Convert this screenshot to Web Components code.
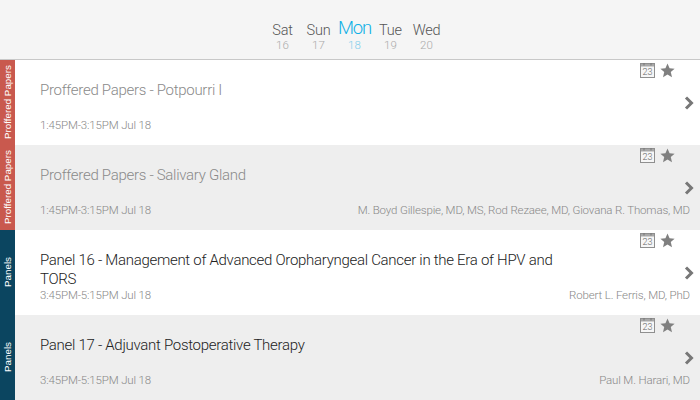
<!DOCTYPE html>
<html>
<head>
<meta charset="utf-8">
<style>
  html, body { margin: 0; padding: 0; height: 400px; overflow: hidden; background: #fff; }
  body { font-family: Roboto, "Liberation Sans", sans-serif; font-weight: 300; }
</style>
</head>
<body>
<day-bar>
  <day-tab name="Sat" num="16"></day-tab>
  <day-tab name="Sun" num="17"></day-tab>
  <day-tab name="Mon" num="18" active></day-tab>
  <day-tab name="Tue" num="19"></day-tab>
  <day-tab name="Wed" num="20"></day-tab>
</day-bar>
<session-row track="Proffered Papers" color="#c9594e" time="1:45PM-3:15PM Jul 18" muted>Proffered Papers - Potpourri I</session-row>
<session-row track="Proffered Papers" color="#c9594e" time="1:45PM-3:15PM Jul 18" speakers="M. Boyd Gillespie, MD, MS, Rod Rezaee, MD, Giovana R. Thomas, MD" muted alt>Proffered Papers - Salivary Gland</session-row>
<session-row track="Panels" color="#0b4560" time="3:45PM-5:15PM Jul 18" speakers="Robert L. Ferris, MD, PhD">Panel 16 - Management of Advanced Oropharyngeal Cancer in the Era of HPV and TORS</session-row>
<session-row track="Panels" color="#0b4560" time="3:45PM-5:15PM Jul 18" speakers="Paul M. Harari, MD" alt>Panel 17 - Adjuvant Postoperative Therapy</session-row>

<script>
class DayBar extends HTMLElement {
  constructor() {
    super();
    this.attachShadow({ mode: 'open' });
    this.shadowRoot.innerHTML = `
      <style>
        :host {
          display: flex;
          justify-content: center;
          align-items: flex-end;
          height: 60px;
          box-sizing: border-box;
          padding-bottom: 7px;
          padding-left: 9px;
          background: #f5f5f5;
          border-bottom: 1px solid #c8c8c8;
        }
      </style>
      <slot></slot>
    `;
  }
}

class DayTab extends HTMLElement {
  constructor() {
    super();
    this.attachShadow({ mode: 'open' });
    this.shadowRoot.innerHTML = `
      <style>
        :host {
          display: flex;
          flex-direction: column;
          align-items: center;
          width: 36px;
        }
        #name { font-size: 14.5px; line-height: 16px; letter-spacing: -0.2px; color: #555; }
        #num { font-size: 11.5px; line-height: 13px; color: #aaa; }
        :host([active]) #name { font-size: 18.5px; line-height: 20px; letter-spacing: -1.2px; color: #0fb0e6; margin-bottom: 1px; }
        :host([active]) #num { color: #7fcdec; }
      </style>
      <span id="name"></span>
      <span id="num"></span>
    `;
    this.shadowRoot.querySelector('#name').textContent = this.getAttribute('name');
    this.shadowRoot.querySelector('#num').textContent = this.getAttribute('num');
  }
}

class SessionRow extends HTMLElement {
  constructor() {
    super();
    this.attachShadow({ mode: 'open' });
    this.shadowRoot.innerHTML = `
      <style>
        :host {
          display: grid;
          grid-template-columns: 15px 1fr;
          height: 85px;
          background: #fff;
        }
        :host([alt]) { background: #eee; }
        #track {
          display: flex;
          align-items: center;
          justify-content: center;
          box-sizing: border-box;
          padding-left: 1px;
          writing-mode: vertical-rl;
          transform: rotate(180deg);
          color: #fff;
          font-family: "Liberation Sans", sans-serif;
          font-size: 9.8px;
          font-weight: 400;
        }
        #body {
          position: relative;
          display: grid;
          grid-template-columns: 1fr auto;
          grid-template-rows: 1fr auto;
          min-width: 0;
          padding: 0 10px 13px 25px;
          color: #222;
        }
        :host([muted]) #body { color: #8a8a8a; }
        #title {
          grid-column: 1;
          grid-row: 1;
          font-size: 15px;
          line-height: 19px;
          letter-spacing: -0.29px;
          padding-top: 21px;
          max-width: 530px;
        }
        #time, #speakers { font-size: 11.5px; line-height: 13px; letter-spacing: -0.15px; color: #888; }
        #time { grid-column: 1; grid-row: 2; }
        #speakers { grid-column: 2; grid-row: 2; text-align: right; white-space: nowrap; }
        #tools {
          position: absolute;
          top: 3px;
          right: 25px;
          display: flex;
          align-items: center;
          gap: 5px;
        }
        #chevron { position: absolute; top: 36px; right: 6px; }
        svg { display: block; }
      </style>
      <div id="track"></div>
      <div id="body">
        <div id="title"><slot></slot></div>
        <div id="time"></div>
        <div id="speakers"></div>
        <div id="tools">
          <svg width="15" height="15" viewBox="0 0 15 15">
            <rect x="0.5" y="0.5" width="14" height="14" fill="#f6f6f6" stroke="#8f8f8f"/>
            <rect x="1" y="1" width="13" height="2.5" fill="#a8a8a8"/>
            <path d="M4 0v2.5M11 0v2.5" stroke="#777" stroke-width="1"/>
            <text x="7.5" y="12.4" font-size="9" font-weight="300" text-anchor="middle" fill="#666" font-family="Roboto">23</text>
          </svg>
          <svg width="15" height="15" viewBox="0 0 16 16">
            <path d="M8 .6l2.2 5 5.4.5-4.1 3.6 1.3 5.4L8 12.3l-4.8 2.8 1.3-5.4L.4 6.1l5.4-.5z" fill="#808080"/>
          </svg>
        </div>
        <svg id="chevron" width="10" height="14" viewBox="0 0 10 14">
          <path d="M2 1.5L7.5 7 2 12.5" fill="none" stroke="#777" stroke-width="3"/>
        </svg>
      </div>
    `;
    const track = this.shadowRoot.querySelector('#track');
    track.textContent = this.getAttribute('track');
    track.style.background = this.getAttribute('color');
    this.shadowRoot.querySelector('#time').textContent = this.getAttribute('time');
    this.shadowRoot.querySelector('#speakers').textContent = this.getAttribute('speakers') || '';
  }
}

customElements.define('day-bar', DayBar);
customElements.define('day-tab', DayTab);
customElements.define('session-row', SessionRow);
</script>
</body>
</html>
